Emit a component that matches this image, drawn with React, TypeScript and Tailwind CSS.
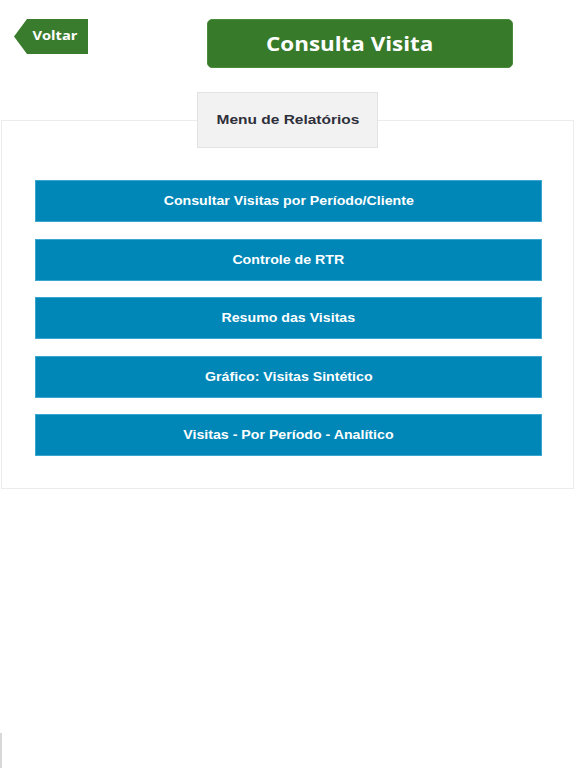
const REPORTS = [
  'Consultar Visitas por Período/Cliente',
  'Controle de RTR',
  'Resumo das Visitas',
  'Gráfico: Visitas Sintético',
  'Visitas - Por Período - Analítico',
]

export default function App() {
  return (
    <div className="relative h-[768px] w-[576px] overflow-hidden bg-white">
      {/* header: back tag + title */}
      <div className="flex items-start pt-[19px]">
        <button className="ml-[14px] flex h-[35px] items-stretch">
          <span className="h-[35px] w-[13px] bg-[#3a7c2d] [clip-path:polygon(100%_0,100%_100%,0_50%)]" />
          <span className="flex w-[61px] items-center justify-center bg-[#3a7c2d] pr-[5px] pb-[1px] font-['Open_Sans',sans-serif] text-[13px] font-bold text-white">
            <span className="inline-block scale-x-[1.13]">Voltar</span>
          </span>
        </button>
        <div className="ml-[119px] flex h-[49px] w-[306px] items-center justify-center rounded-[5px] border border-[#4b8a3c] bg-[#377a2a] pr-[20px] font-['Open_Sans',sans-serif] text-[20px] font-bold text-white">
          <span className="inline-block scale-x-[1.12]">Consulta Visita</span>
        </div>
      </div>

      {/* reports panel */}
      <div className="relative mt-[52px] ml-[1px] w-[573px] border border-[#ececec] px-[33px] pt-[59px] pb-[32px]">
        <div className="absolute top-[-29px] left-[195px] flex h-[56px] w-[181px] items-center justify-center border border-[#e2e2e2] bg-[#f2f2f2] font-['Liberation_Sans',Arial,sans-serif] text-[13px] font-bold text-[#2f2f3a]">
          <span className="inline-block scale-x-[1.19]">Menu de Relatórios</span>
        </div>
        <div className="flex flex-col gap-[16.5px]">
          {REPORTS.map(r => (
            <button
              key={r}
              className="flex h-[42px] w-[507px] items-center justify-center border border-[#3aa6d0] bg-[#0087b8] font-['Liberation_Sans',Arial,sans-serif] text-[13px] font-bold text-white"
            >
              <span className="inline-block scale-x-[1.09]">{r}</span>
            </button>
          ))}
        </div>
      </div>

      <div className="absolute bottom-0 left-0 h-[35px] w-[2px] bg-[#d8d8d8]" />
    </div>
  )
}
